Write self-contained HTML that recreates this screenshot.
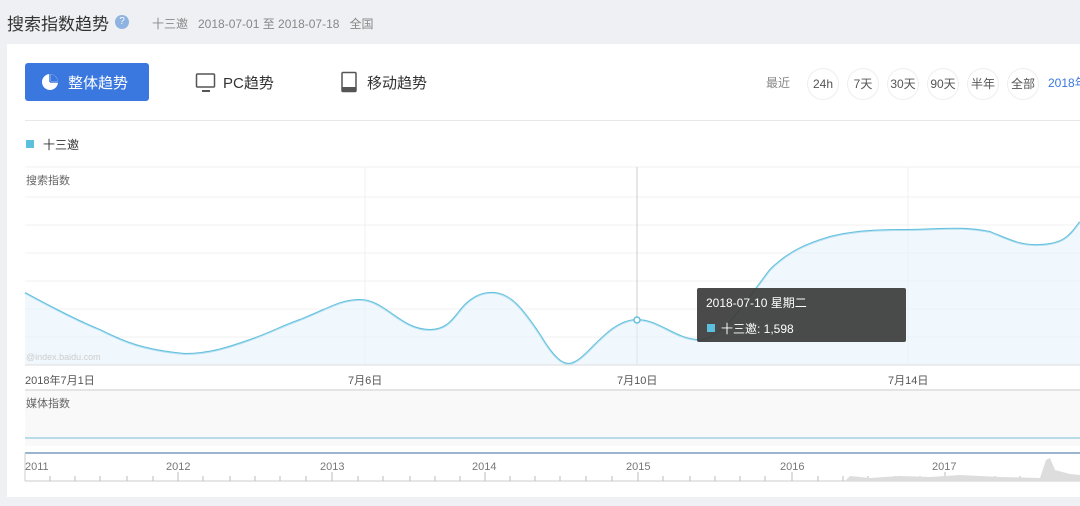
<!DOCTYPE html><html><head><meta charset="utf-8"><style>
body{margin:0;width:1080px;height:506px;overflow:hidden;background:#eef0f3;font-family:"Liberation Sans","Noto Sans CJK SC",sans-serif;position:relative}
.a{position:absolute;white-space:nowrap}
</style></head><body>
<div class="a" style="left:7px;top:10px;font-size:17px;color:#333">搜索指数趋势</div>
<div class="a" style="left:115px;top:15px;width:14px;height:14px;border-radius:50%;background:#8fb3e0;color:#fff;font-size:10px;text-align:center;line-height:14px">?</div>
<div class="a" style="left:152px;top:15px;font-size:12px;color:#888">十三邀 &nbsp;&nbsp;2018-07-01 至 2018-07-18 &nbsp;&nbsp;全国</div>
<div class="a" style="left:7px;top:44px;width:1073px;height:453px;background:#fff"></div>
<div class="a" style="left:25px;top:63px;width:124px;height:38px;background:#3a78df;border-radius:3px"></div>
<svg class="a" style="left:40px;top:72px" width="20" height="20"><circle cx="10" cy="10" r="8" fill="#fff"/><path d="M11 9V2.2A8 8 0 0 1 17.8 9Z" fill="#3a78df"/><path d="M10 10V2M10 10H18" stroke="#3a78df" stroke-width="1.5"/></svg>
<div class="a" style="left:68px;top:72px;font-size:15px;color:#fff">整体趋势</div>
<svg class="a" style="left:195px;top:72px" width="22" height="22"><rect x="1.5" y="2" width="18" height="13" rx="1" fill="none" stroke="#555" stroke-width="1.5"/><path d="M7 19h8" stroke="#555" stroke-width="2"/></svg>
<div class="a" style="left:223px;top:72px;font-size:15px;color:#333">PC趋势</div>
<svg class="a" style="left:340px;top:71px" width="18" height="22"><rect x="2" y="1.5" width="14" height="19" rx="1" fill="none" stroke="#555" stroke-width="1.5"/><rect x="2" y="16" width="14" height="4.5" fill="#555"/></svg>
<div class="a" style="left:367px;top:72px;font-size:15px;color:#333">移动趋势</div>
<div class="a" style="left:766px;top:74px;font-size:12px;color:#888">最近</div>
<div class="a" style="left:807px;top:68px;font-size:12px;color:#555;display:flex;gap:8px">
<span style="width:30px;height:30px;border:1px solid #eee;border-radius:50%;text-align:center;line-height:30px">24h</span>
<span style="width:30px;height:30px;border:1px solid #eee;border-radius:50%;text-align:center;line-height:30px">7天</span>
<span style="width:30px;height:30px;border:1px solid #eee;border-radius:50%;text-align:center;line-height:30px">30天</span>
<span style="width:30px;height:30px;border:1px solid #eee;border-radius:50%;text-align:center;line-height:30px">90天</span>
<span style="width:30px;height:30px;border:1px solid #eee;border-radius:50%;text-align:center;line-height:30px">半年</span>
<span style="width:30px;height:30px;border:1px solid #eee;border-radius:50%;text-align:center;line-height:30px">全部</span></div>
<div class="a" style="left:1048px;top:74px;font-size:12px;color:#3a78df">2018年</div>
<div class="a" style="left:25px;top:120px;width:1055px;height:1px;background:#e8e8e8"></div>
<div class="a" style="left:26px;top:140px;width:8px;height:8px;background:#5bc0de"></div>
<div class="a" style="left:43px;top:136px;font-size:12px;color:#333">十三邀</div>
<svg class="a" style="left:0;top:0" width="1080" height="506">
<g stroke="#f0f0f0" stroke-width="1">
<path d="M25 167H1080M25 197H1080M25 225H1080M25 253H1080M25 281H1080M25 309H1080M25 337H1080"/>
<path d="M365 167V365M908 167V365"/></g>
<path d="M637 167V365" stroke="#ccc"/>
<path d="M25 293C60 312 80 322 100 330C120 340 140 350 185 354C210 354 230 347 250 340C270 333 285 325 300 320C330 308 340 300 360 300C385 300 400 330 430 330C450 330 455 315 465 305C475 295 485 292 495 293C510 295 520 305 540 335C555 360 565 368 575 362C590 355 610 320 637 320C660 320 675 340 700 340C720 340 740 310 770 270C790 250 810 243 830 237C850 232 870 230 900 230C940 230 960 226 990 232C1010 240 1020 246 1040 245C1065 244 1070 235 1080 222" fill="none" stroke="#64c0de" stroke-width="2"/>
<path d="M25 293C60 312 80 322 100 330C120 340 140 350 185 354C210 354 230 347 250 340C270 333 285 325 300 320C330 308 340 300 360 300C385 300 400 330 430 330C450 330 455 315 465 305C475 295 485 292 495 293C510 295 520 305 540 335C555 360 565 368 575 362C590 355 610 320 637 320C660 320 675 340 700 340C720 340 740 310 770 270C790 250 810 243 830 237C850 232 870 230 900 230C940 230 960 226 990 232C1010 240 1020 246 1040 245C1065 244 1070 235 1080 222V365H25Z" fill="#e6f3fb" opacity=".6"/>
<circle cx="637" cy="320" r="3" fill="#fff" stroke="#64c0de" stroke-width="1.5"/>
<path d="M25 365H1080" stroke="#ddd"/>
<path d="M25 390H1080" stroke="#e4e4e4" stroke-width="2"/>
<rect x="25" y="391" width="1055" height="55" fill="#f9f9fa"/>
<path d="M25 438H1080" stroke="#b9dde8" stroke-width="2"/>
<path d="M25 453H1080" stroke="#7a9cbf" stroke-width="1.5"/>
<path d="M25 453V481M25 481H1080" stroke="#ccc"/>
<g stroke="#bbb"><path d="M50 476v5M75 476v5M100 476v5M127 476v5M153 476v5M178 472v9M203 476v5M230 476v5M255 476v5M280 476v5M306 476v5M332 472v9M358 476v5M383 476v5M410 476v5M435 476v5M460 476v5M485 472v9M510 476v5M535 476v5M560 476v5M586 476v5M612 476v5M638 472v9M663 476v5M690 476v5M715 476v5M740 476v5M765 476v5M792 472v9M818 476v5M843 476v5M868 476v5M895 476v5M920 476v5M945 472v9M970 476v5M995 476v5M1020 476v5M1048 472v9"/></g>
<path d="M845 481L850 476 870 478 900 476 930 477 960 475 1000 477 1040 478 1046 460 1050 458 1055 470 1070 474 1080 475V481Z" fill="#ddd"/>
</svg>
<div class="a" style="left:26px;top:172px;font-size:11px;color:#666">搜索指数</div>
<div class="a" style="left:26px;top:352px;font-size:9px;color:#ccc">@index.baidu.com</div>
<div class="a" style="left:25px;top:372px;font-size:11px;color:#555">2018年7月1日</div>
<div class="a" style="left:348px;top:372px;font-size:11px;color:#555">7月6日</div>
<div class="a" style="left:617px;top:372px;font-size:11px;color:#555">7月10日</div>
<div class="a" style="left:888px;top:372px;font-size:11px;color:#555">7月14日</div>
<div class="a" style="left:26px;top:395px;font-size:11px;color:#666">媒体指数</div>
<div class="a" style="top:461px;left:0;font-size:11px;color:#777">
<span class="a" style="left:25px">2011</span><span class="a" style="left:166px">2012</span><span class="a" style="left:320px">2013</span><span class="a" style="left:472px">2014</span><span class="a" style="left:626px">2015</span><span class="a" style="left:780px">2016</span><span class="a" style="left:932px">2017</span></div>
<div class="a" style="left:697px;top:288px;width:209px;height:54px;background:rgba(60,60,60,.93);border-radius:2px"></div>
<div class="a" style="left:706px;top:294px;font-size:12px;color:#fff">2018-07-10 星期二</div>
<div class="a" style="left:707px;top:324px;width:8px;height:8px;background:#5bc0de"></div>
<div class="a" style="left:721px;top:320px;font-size:12px;color:#fff">十三邀: 1,598</div>
</body></html>
